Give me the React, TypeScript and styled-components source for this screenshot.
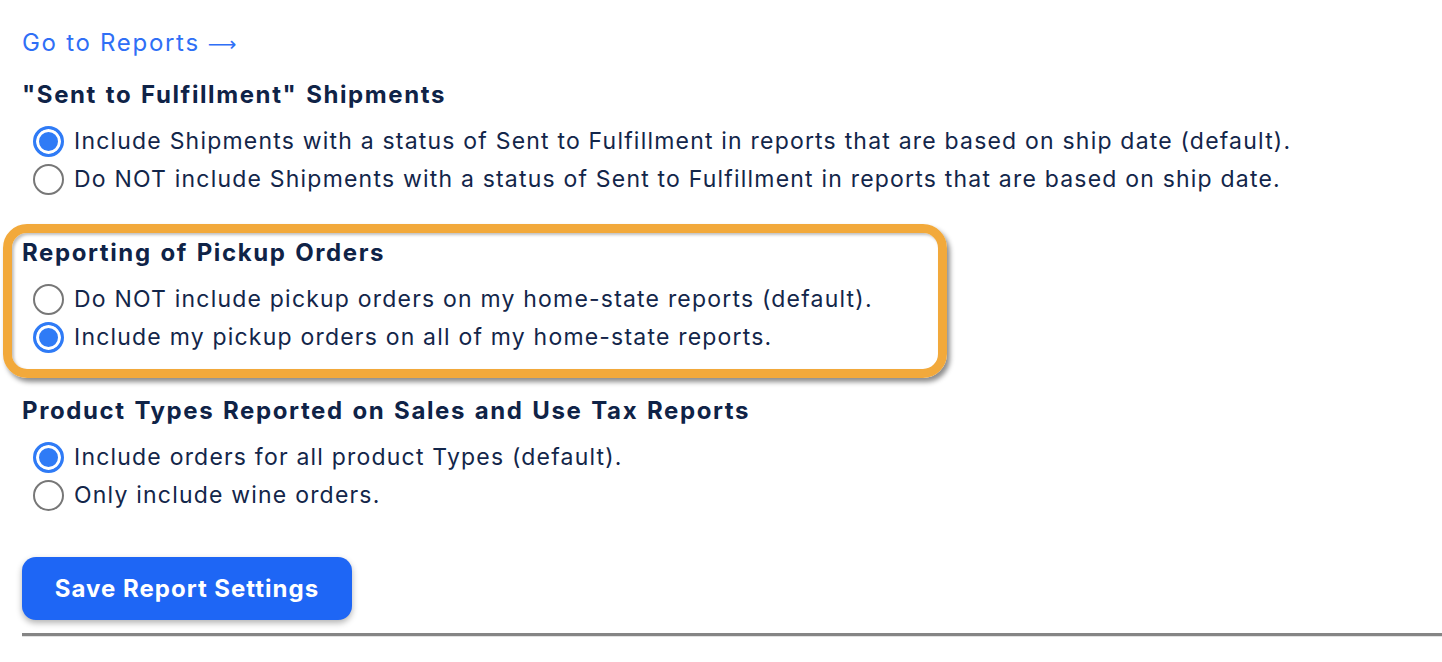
import React, { useState } from 'react';
import styled, { createGlobalStyle } from 'styled-components';

const GlobalStyle = createGlobalStyle`
  body {
    margin: 0;
    background: #fff;
    font-family: Inter, "Liberation Sans", sans-serif;
    color: #13264a;
  }
`;

const Page = styled.div`
  padding: 28px 0 0 22px;
`;

const ReportsLink = styled.a`
  display: block;
  font-size: 24px;
  line-height: 30px;
  letter-spacing: 1.7px;
  color: #2f6ff6;
  text-decoration: none;
  cursor: pointer;
`;

const Arrow = styled.span`
  font-family: "DejaVu Sans", sans-serif;
  font-size: 20px;
  letter-spacing: 0;
  margin-left: 8px;
`;

const Section = styled.section<{ $highlight?: boolean }>`
  position: relative;
  margin-top: 20px;

  & + & {
    margin-top: 39px;
  }

  ${(p) =>
    p.$highlight &&
    `
    &::before {
      content: '';
      position: absolute;
      left: -19px;
      top: -13px;
      width: 944px;
      height: 154px;
      box-sizing: border-box;
      border: 9px solid #f2a93b;
      border-radius: 24px;
      box-shadow: 3px 4px 5px rgba(0, 0, 0, 0.45), inset 2px 2px 3px rgba(0, 0, 0, 0.25);
      pointer-events: none;
    }
  `}
`;

const Heading = styled.h3`
  margin: 0 0 11px;
  font-size: 24px;
  line-height: 32px;
  font-weight: 700;
  letter-spacing: 1.6px;
  word-spacing: 1.5px;
  color: #0f2347;
`;

const Options = styled.div`
  display: flex;
  flex-direction: column;
  padding-left: 11px;
`;

const Option = styled.label`
  display: flex;
  align-items: center;
  gap: 10px;
  height: 38px;
  font-size: 23px;
  letter-spacing: 1.2px;
  color: #13264a;
  cursor: pointer;
`;

const Radio = styled.input`
  appearance: none;
  margin: 0;
  width: 31px;
  height: 31px;
  flex: none;
  border-radius: 50%;
  border: 2.5px solid #777;
  background: #fff;
  box-sizing: border-box;

  &:checked {
    border: 3px solid #2f7bf6;
    background: #2f7bf6;
    box-shadow: inset 0 0 0 3px #fff;
  }
`;

const SaveButton = styled.button`
  margin-top: 43px;
  width: 330px;
  height: 63px;
  border: none;
  border-radius: 14px;
  background: #1e66f5;
  color: #fff;
  font-family: inherit;
  font-size: 24px;
  font-weight: 700;
  letter-spacing: 1px;
  box-shadow: 0 3px 6px rgba(0, 0, 0, 0.3);
  cursor: pointer;
`;

const Rule = styled.hr`
  margin: 13px 0 0;
  border: none;
  height: 3px;
  background: #858585;
  border-bottom: 1px solid #e2e2e2;
`;

const sections = [
  {
    title: '"Sent to Fulfillment" Shipments',
    name: 'fulfillment',
    def: 0,
    highlight: false,
    options: [
      'Include Shipments with a status of Sent to Fulfillment in reports that are based on ship date (default).',
      'Do NOT include Shipments with a status of Sent to Fulfillment in reports that are based on ship date.',
    ],
  },
  {
    title: 'Reporting of Pickup Orders',
    name: 'pickup',
    def: 1,
    highlight: true,
    options: [
      'Do NOT include pickup orders on my home-state reports (default).',
      'Include my pickup orders on all of my home-state reports.',
    ],
  },
  {
    title: 'Product Types Reported on Sales and Use Tax Reports',
    name: 'product',
    def: 0,
    highlight: false,
    options: ['Include orders for all product Types (default).', 'Only include wine orders.'],
  },
];

const SettingSection = ({ title, name, options, highlight, def }: (typeof sections)[number]) => {
  const [value, setValue] = useState(def);
  return (
    <Section $highlight={highlight}>
      <Heading>{title}</Heading>
      <Options>
        {options.map((label, i) => (
          <Option key={i}>
            <Radio type="radio" name={name} checked={value === i} onChange={() => setValue(i)} />
            {label}
          </Option>
        ))}
      </Options>
    </Section>
  );
};

export default function App() {
  return (
    <>
      <GlobalStyle />
      <Page>
        <ReportsLink>
          Go to Reports<Arrow>⟶</Arrow>
        </ReportsLink>
        {sections.map((s) => (
          <SettingSection key={s.name} {...s} />
        ))}
        <SaveButton>Save Report Settings</SaveButton>
        <Rule />
      </Page>
    </>
  );
}
